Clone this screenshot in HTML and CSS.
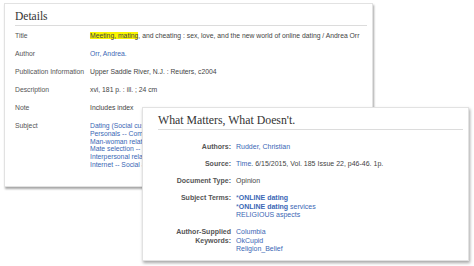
FILE: index.html
```html
<!DOCTYPE html>
<html lang="en">

<head>
    <meta charset="UTF-8">
    <title>Catalog records</title>
    <link rel="stylesheet" href="styles.css">
</head>

<body>
    <div class="details">
        <h2 class="details_head">Details</h2>
        <div class="details_rows">
            <span class="label">Title</span>
            <span class="value"><mark class="hit">Meeting, mating</mark>, and cheating : sex, love, and the new world of online dating / Andrea Orr</span>

            <span class="label">Author</span>
            <span class="value"><a href="#">Orr, Andrea.</a></span>

            <span class="label">Publication Information</span>
            <span class="value">Upper Saddle River, N.J. : Reuters, c2004</span>

            <span class="label">Description</span>
            <span class="value">xvi, 181 p. : ill. ; 24 cm</span>

            <span class="label">Note</span>
            <span class="value">Includes index</span>

            <span class="label">Subject</span>
            <span class="value subjects">
                <a href="#">Dating (Social customs)</a>
                <a href="#">Personals -- Computer network resources</a>
                <a href="#">Man-woman relationships</a>
                <a href="#">Mate selection -- Computer network resources</a>
                <a href="#">Interpersonal relations</a>
                <a href="#">Internet -- Social aspects</a>
            </span>
        </div>
    </div>

    <div class="record">
        <h2 class="record_head">What Matters, What Doesn't.</h2>
        <div class="record_rows">
            <span class="r_label">Authors:</span>
            <span class="r_value"><a href="#">Rudder, Christian</a></span>

            <span class="r_label">Source:</span>
            <span class="r_value"><a href="#">Time</a>. 6/15/2015, Vol. 185 Issue 22, p46-46. 1p.</span>

            <span class="r_label">Document Type:</span>
            <span class="r_value">Opinion</span>

            <span class="r_label">Subject Terms:</span>
            <span class="r_value r_list">
                <a href="#">*<b>ONLINE</b> <b>dating</b></a>
                <a href="#">*<b>ONLINE</b> <b>dating</b> services</a>
                <a href="#">RELIGIOUS aspects</a>
            </span>

            <span class="r_label">Author-Supplied Keywords:</span>
            <span class="r_value r_list">
                <a href="#">Columbia</a>
                <a href="#">OkCupid</a>
                <a href="#">Religion_Belief</a>
            </span>
        </div>
    </div>
</body>

</html>
```

FILE: styles.css
```css
body {
    margin: 0;
    padding: 0;
    background-color: #fff;
    font-family: "Liberation Sans", Arial, sans-serif;
    width: 474px;
    height: 266px;
    overflow: hidden;
}

a {
    color: #3b67b5;
    text-decoration: none;
}

/* back card */
.details {
    margin: 3px 0 0 4px;
    width: 369px;
    height: 184px;
    box-sizing: border-box;
    border: 1px solid #e2e2e2;
    background-color: #fff;
    box-shadow: 1px 2px 2px rgba(0, 0, 0, 0.35);
    padding: 5px 5px 0 10px;
    overflow: hidden;
}

.details_head {
    margin: 0;
    padding-bottom: 2px;
    border-bottom: 1px solid #dcdcdc;
    font-family: "Liberation Serif", "Times New Roman", serif;
    font-weight: normal;
    font-size: 11.5px;
    line-height: 14px;
    color: #333;
}

.details_rows {
    display: grid;
    grid-template-columns: 75px 1fr;
    row-gap: 10px;
    margin-top: 6px;
    font-size: 6.8px;
    line-height: 8px;
    color: #555;
}

.label {
    white-space: nowrap;
}

.value {
    white-space: nowrap;
    color: #444;
}

.hit {
    background-color: #f8f400;
    color: #444;
}

/* the front card hides the rest of these lines */
.subjects {
    display: flex;
    flex-direction: column;
    line-height: 7.8px;
    width: 52px;
    overflow: hidden;
}

/* front card */
.record {
    position: absolute;
    left: 142px;
    top: 107px;
    width: 327px;
    height: 154px;
    box-sizing: border-box;
    border: 1px solid #e2e2e2;
    background-color: #fff;
    box-shadow: 1px 2px 3px rgba(0, 0, 0, 0.35);
    padding: 5px 5px 0 15px;
}

.record_head {
    margin: 0;
    padding-bottom: 2px;
    border-bottom: 1px solid #dcdcdc;
    font-family: "Liberation Serif", "Times New Roman", serif;
    font-weight: normal;
    font-size: 11.8px;
    line-height: 14px;
    color: #333;
}

.record_rows {
    display: grid;
    grid-template-columns: 73px 1fr;
    column-gap: 5px;
    row-gap: 8.5px;
    margin-top: 13px;
    font-size: 7px;
    line-height: 8.5px;
    color: #444;
}

.r_label {
    text-align: right;
    font-weight: bold;
    color: #555;
}

.r_list {
    display: flex;
    flex-direction: column;
}
```
